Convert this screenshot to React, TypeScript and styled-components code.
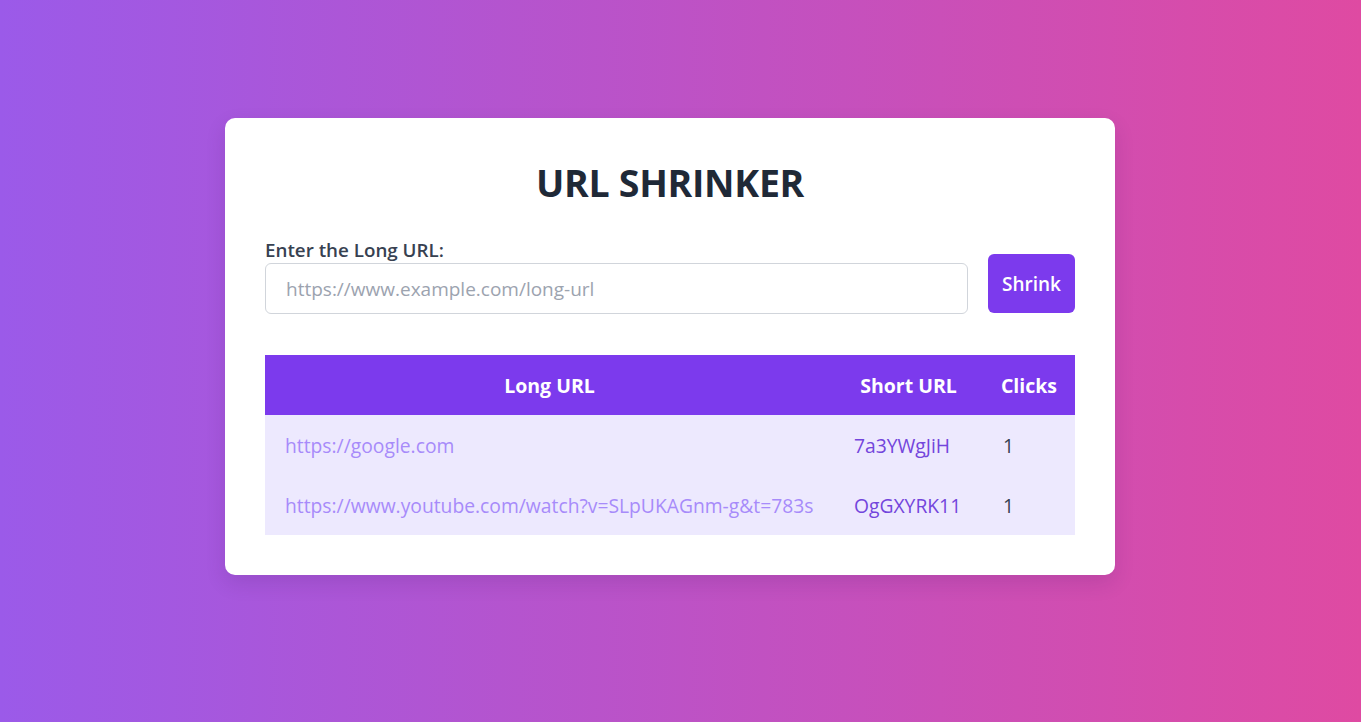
import * as React from "react";
import styled, { createGlobalStyle } from "styled-components";

interface LinkRow {
    longUrl: string;
    shortUrl: string;
    clicks: number;
}

const rows: LinkRow[] = [
    { longUrl: "https://google.com", shortUrl: "7a3YWgJiH", clicks: 1 },
    { longUrl: "https://www.youtube.com/watch?v=SLpUKAGnm-g&t=783s", shortUrl: "OgGXYRK11", clicks: 1 },
];

const GlobalStyle = createGlobalStyle`
    html, body {
        margin: 0;
        padding: 0;
    }

    body {
        font-family: "Open Sans", "Noto Sans", sans-serif;
    }

    * {
        box-sizing: border-box;
    }
`;

const Page = styled.div`
    min-height: 722px;
    padding: 118px 21px 0 0;
    display: flex;
    justify-content: center;
    align-items: flex-start;
    background: linear-gradient(to right, #9b5ae9, #df4aa2);
`;

const Card = styled.div`
    width: 890px;
    padding: 40px;
    background: #ffffff;
    border-radius: 10px;
    box-shadow: 0 8px 20px rgba(60, 20, 90, 0.14);
`;

const Title = styled.h1`
    margin: 0 0 30px;
    line-height: 50px;
    text-align: center;
    font-size: 37.5px;
    font-weight: 700;
    color: #1f2937;
    letter-spacing: -0.3px;
`;

const Form = styled.div`
    display: flex;
    align-items: flex-end;
    gap: 20px;
`;

const Field = styled.div`
    flex: 1;
    display: flex;
    flex-direction: column;
`;

const Label = styled.label`
    font-size: 18.8px;
    line-height: 24px;
    font-weight: 600;
    color: #374151;
    margin-bottom: 1px;
`;

const Input = styled.input`
    height: 51px;
    padding: 0 20px;
    border: 1px solid #d1d5db;
    border-radius: 6px;
    font-family: inherit;
    font-size: 19px;
    color: #1f2937;
    outline: none;

    &::placeholder {
        color: #9ca3af;
    }
`;

const Button = styled.button`
    height: 59px;
    width: 87px;
    margin-bottom: 1px;
    border: none;
    border-radius: 6px;
    background: #7c3aed;
    color: #ffffff;
    font-family: inherit;
    font-size: 19px;
    font-weight: 600;
    cursor: pointer;
`;

const Table = styled.table`
    width: 100%;
    margin-top: 41px;
    border-collapse: collapse;
    table-layout: fixed;
    font-size: 19.3px;
`;

const Th = styled.th<{ width: number }>`
    width: ${ p => p.width }px;
    height: 60px;
    padding: 0 10px;
    background: #7c3aed;
    color: #ffffff;
    font-size: 19.5px;
    font-weight: 700;
    text-align: center;
    white-space: nowrap;
`;

const Td = styled.td<{ tone: "long" | "short" | "count" }>`
    height: 60px;
    padding: 0 20px;
    background: #ede9fe;
    white-space: nowrap;
    color: ${ p => p.tone === "long" ? "#a78bfa" : p.tone === "short" ? "#7345dc" : "#374151" };
`;

export default function App() {
    return <>
        <GlobalStyle />
        <Page>
            <Card>
                <Title>URL SHRINKER</Title>
                <Form>
                    <Field>
                        <Label htmlFor="long-url">Enter the Long URL:</Label>
                        <Input id="long-url" type="text" placeholder="https://www.example.com/long-url" />
                    </Field>
                    <Button>Shrink</Button>
                </Form>
                <Table>
                    <thead>
                        <tr>
                            <Th width={ 569 }>Long URL</Th>
                            <Th width={ 149 }>Short URL</Th>
                            <Th width={ 92 }>Clicks</Th>
                        </tr>
                    </thead>
                    <tbody>
                        {rows.map(row => <tr key={ row.shortUrl }>
                            <Td tone="long">{row.longUrl}</Td>
                            <Td tone="short">{row.shortUrl}</Td>
                            <Td tone="count">{row.clicks}</Td>
                        </tr>)}
                    </tbody>
                </Table>
            </Card>
        </Page>
    </>;
}
